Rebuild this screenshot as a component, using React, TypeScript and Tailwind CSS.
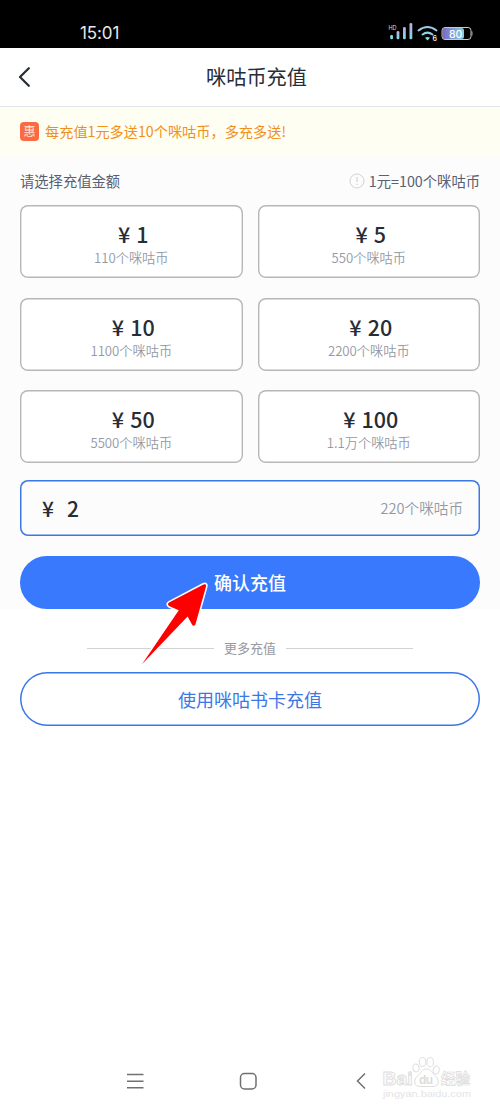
import { clsx } from 'clsx';

const AMOUNTS = [
  { price: '1', coins: '110个咪咕币' },
  { price: '5', coins: '550个咪咕币' },
  { price: '10', coins: '1100个咪咕币' },
  { price: '20', coins: '2200个咪咕币' },
  { price: '50', coins: '5500个咪咕币' },
  { price: '100', coins: '1.1万个咪咕币' },
];

const StatusBar = () => (
  <div className="flex h-12 items-center justify-between bg-black pt-[22px] pr-[27px] pb-[4px] pl-[80px]">
    <span className="font-['Inter',sans-serif] text-[17px] leading-5 tracking-[-0.1px] text-[#e8e8e8]">
      15:01
    </span>
    <svg width="86" height="22" viewBox="387 22 86 22" fill="none">
      <defs>
        <linearGradient id="signal" x1="0" y1="0" x2="0" y2="1">
          <stop offset="0" stopColor="#b9a9dc" />
          <stop offset="1" stopColor="#7fdce8" />
        </linearGradient>
        <linearGradient id="battery" x1="0" y1="0" x2="1" y2="0">
          <stop offset="0" stopColor="#7b66c9" />
          <stop offset="1" stopColor="#83d2dc" />
        </linearGradient>
      </defs>
      <text x="388.5" y="29.5" fontSize="5.5" fill="#ddd" fontFamily="Inter, sans-serif">
        HD
      </text>
      <rect x="390.2" y="35" width="2.8" height="4.3" rx="1.2" fill="#84dce8" />
      <rect x="396.6" y="31" width="2.8" height="8.3" rx="1.2" fill="url(#signal)" />
      <rect x="403" y="27" width="2.8" height="12.3" rx="1.2" fill="url(#signal)" />
      <rect x="409.5" y="23" width="2.8" height="16.3" rx="1.2" fill="url(#signal)" />
      <path d="M418.5 30.5q9-7 18 0" stroke="#9dc9e6" strokeWidth="2" strokeLinecap="round" />
      <path d="M422.5 34.5q5-3.8 10 0" stroke="#8fd2e4" strokeWidth="2" strokeLinecap="round" />
      <path d="M425 37.8q2.5-1.4 5 0l-2.5 2.8z" fill="#84dce8" />
      <text x="432.4" y="41" fontSize="7" fontWeight="600" fill="#eee" fontFamily="Inter, sans-serif">
        6
      </text>
      <rect x="442.5" y="28" width="21.5" height="11" rx="2.5" fill="url(#battery)" />
      <rect x="442" y="27.5" width="29" height="12" rx="3" stroke="#c9c9c9" strokeWidth="1" />
      <path d="M472 31.5v4" stroke="#aaa" strokeWidth="1" />
      <text x="449" y="37.6" fontSize="10.5" fontWeight="500" fill="#fff" fontFamily="Inter, sans-serif">
        80
      </text>
    </svg>
  </div>
);

const Header = () => (
  <header className="flex h-[59px] items-center border-b border-[#e3e4ea] px-[18px]">
    <svg width="13" height="20" viewBox="0 0 13 20" fill="none">
      <path
        d="M10.8 1.2 2 10l8.8 8.8"
        stroke="#272d38"
        strokeWidth="2.2"
        strokeLinecap="round"
        strokeLinejoin="round"
      />
    </svg>
    <h1 className="flex-1 text-center text-[20.2px] leading-7 text-[#272d38]">
      咪咕币充值
    </h1>
  </header>
);

const Banner = () => (
  <div className="flex h-[48px] items-center gap-[6px] bg-[#fffef2] px-5">
    <span className="flex size-[19px] items-center justify-center rounded bg-[#fb6a43] text-[12px] leading-none text-[#ffe3d6]">
      惠
    </span>
    <span className="text-[14.2px] leading-5 text-[#f0901c]">
      每充值1元多送10个咪咕币，多充多送!
    </span>
  </div>
);

const AmountCard = ({ price, coins }: { price: string; coins: string }) => (
  <button className="flex h-[73px] flex-col items-center rounded-lg bg-white pt-[14px] shadow-[inset_0_0_0_1.4px_#b7b7b7]">
    <span className="flex gap-[6px] pl-[4px] text-[21.5px] leading-[29px] font-medium text-[#272d38]">
      <span>¥</span>
      <span>{price}</span>
    </span>
    <span className="pt-px text-[13.2px] leading-[18px] font-[350] text-[#9499a5]">{coins}</span>
  </button>
);

const Divider = ({ className }: { className?: string }) => (
  <span className={clsx('h-px w-[127px] bg-[#d2d2d2]', className)} />
);

const PointerArrow = () => (
  <svg
    className="absolute top-[575px] left-[135px]"
    width="80"
    height="95"
    viewBox="135 575 80 95"
  >
    <path
      d="M142 664.3 178.8 610.3 169.5 606.2Q166.3 604.2 169.5 602.3L203.5 584.5Q206.8 583.3 206 586.5L195.4 624.4Q193.8 627 192 624.5L187.6 616.6Z"
      fill="#fe0000"
      stroke="#fff"
      strokeWidth="3.2"
      strokeLinejoin="round"
      paintOrder="stroke"
    />
  </svg>
);

const Watermark = () => (
  <svg
    className="absolute top-[1052px] left-[378px]"
    width="104"
    height="52"
    viewBox="378 1052 104 52"
    fill="#fff"
    stroke="#dedede"
    strokeWidth="1"
  >
    <g fontFamily="'Liberation Sans', 'Noto Sans CJK SC', sans-serif" fontWeight="700">
      <text x="382.5" y="1084.5" fontSize="19" textLength="30" lengthAdjust="spacingAndGlyphs">
        Bai
      </text>
      <ellipse cx="416" cy="1068" rx="3" ry="4" transform="rotate(-15 416 1068)" />
      <ellipse cx="422.6" cy="1062" rx="3.3" ry="4.6" />
      <ellipse cx="430.2" cy="1062.2" rx="3.3" ry="4.6" />
      <ellipse cx="436.2" cy="1070" rx="3" ry="4" transform="rotate(15 436.2 1070)" />
      <path d="M426.5 1069c4.5 0 5.5 4 8.5 6.5 5 4 4.5 11-2 11h-13c-6.5 0-7-7-2-11 3-2.5 4-6.5 8.5-6.5z" />
      <text x="419" y="1083.5" fontSize="12" textLength="14" stroke="none" fill="#dcdcdc">
        du
      </text>
      <text x="441" y="1083.5" fontSize="14.5" textLength="29" strokeWidth="0.7" stroke="#dadada">
        经验
      </text>
    </g>
    <text
      x="383"
      y="1097"
      fontSize="9.5"
      textLength="88"
      lengthAdjust="spacingAndGlyphs"
      fill="#e4e4e4"
      stroke="none"
      fontFamily="'Liberation Sans', sans-serif"
    >
      jingyan.baidu.com
    </text>
  </svg>
);

export default function App() {
  return (
    <div
      lang="zh-CN"
      className="relative flex h-[1111px] w-[500px] flex-col overflow-hidden bg-white font-['Noto_Sans_CJK_SC',sans-serif]"
    >
      <StatusBar />
      <Header />
      <Banner />

      <main className="h-[454px] bg-[#fcfcfc] px-5 pt-4">
        <div className="flex h-5 items-center justify-between text-[14.3px] text-[#596070]">
          <span>请选择充值金额</span>
          <span className="flex items-center gap-[4px]">
            <svg width="16" height="16" viewBox="0 0 16 16" fill="none" stroke="#d2d2d2">
              <circle cx="8" cy="8" r="7" />
              <path d="M8 4v5M8 10.8v1.2" strokeWidth="1.2" />
            </svg>
            1元=100个咪咕币
          </span>
        </div>

        <div className="mt-[14px] grid grid-cols-2 gap-x-[15px] gap-y-[19.5px]">
          {AMOUNTS.map((amount) => (
            <AmountCard key={amount.price} {...amount} />
          ))}
        </div>

        <div className="mt-[17px] flex h-[56px] items-center justify-between rounded-lg pr-[17px] pl-[22px] shadow-[inset_0_0_0_1.5px_#3b77e7]">
          <span className="flex gap-[13px] text-[21px] leading-7 font-medium text-[#272d38]">
            <span>¥</span>
            <span>2</span>
          </span>
          <span className="text-[14.6px] font-[350] text-[#9499a5]">220个咪咕币</span>
        </div>

        <button className="mt-[20px] h-[53px] w-full rounded-full bg-[#3979fe] text-[18px] font-medium text-white">
          确认充值
        </button>
      </main>

      <section className="px-5 pt-[29px]">
        <div className="flex h-5 items-center justify-center gap-[10px] text-[13px] text-[#96999f]">
          <Divider />
          <span>更多充值</span>
          <Divider />
        </div>
        <button className="mt-[14px] h-[54px] w-full rounded-full text-[18px] text-[#3b77e7] shadow-[inset_0_0_0_1.5px_#3b77e7]">
          使用咪咕书卡充值
        </button>
      </section>

      <nav className="mt-auto flex h-[61px] items-center pl-[126px]">
        <svg width="241" height="18" viewBox="0 0 241 18" fill="none" stroke="#707070" strokeWidth="1.5">
          <path d="M1 2.5h16.5M1 9.2h16.5M1 15.7h16.5" />
          <rect x="114.5" y="1.5" width="15.5" height="15.5" rx="4" />
          <path d="M239 1.5 231.5 9l7.5 7.5" />
        </svg>
      </nav>

      <PointerArrow />
      <Watermark />
    </div>
  );
}
